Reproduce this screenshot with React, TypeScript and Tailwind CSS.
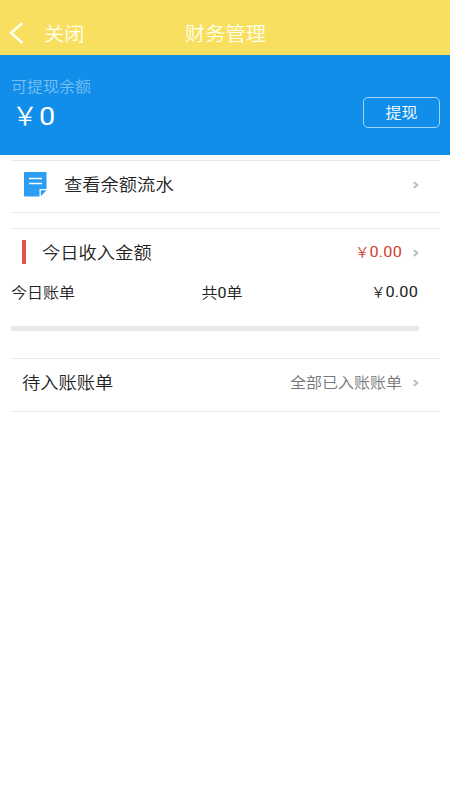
function Arrow() {
  return (
    <svg className="h-2 w-[6px] shrink-0" viewBox="0 0 6 8" fill="none" stroke="#bdbdbd" strokeWidth="2">
      <path d="M.8 1 4.3 4 .8 7" />
    </svg>
  )
}

function NoteIcon() {
  return (
    <svg className="mb-0.5 ml-3 h-[26px] w-6 shrink-0" viewBox="0 0 24 26">
      <path d="M2 1H22.500a1 1 0 0 1 1 1V18H16.500V25.500H2a1 1 0 0 1-1-1V2a1 1 0 0 1 1-1Z" fill="#2b9df4" />
      <path d="M17.800 19.300H23.500L17.800 25.300Z" fill="#2b9df4" />
      <path d="M6 7.500H19M6 12.500H19" stroke="#fff" strokeWidth="1.600" />
    </svg>
  )
}

function Money({ value }: { value: string }) {
  return (
    <span className="inline-flex items-baseline text-[16.300px] leading-none">
      <span className="text-[14.500px]">￥</span>
      <span className="font-[370] tracking-[.2px]">{value}</span>
    </span>
  )
}

export default function App() {
  return (
    <div className="h-[800px] w-[450px] overflow-hidden bg-white font-['Roboto','Noto_Sans_CJK_SC',sans-serif] font-[350] text-[#222]">
      <header className="grid h-[55px] grid-cols-[185px_1fr] items-center bg-[#f9df60] pt-3 text-[20.3px] leading-none text-[#fffff0]">
        <div className="flex items-center">
          <svg className="mb-0.5 ml-[9px] h-[22px] w-[15px]" viewBox="0 0 15 22" fill="none" stroke="currentColor" strokeWidth="2.5">
            <path d="M13.500 1 2 11 13.500 21" />
          </svg>
          <span className="ml-5 mt-0.5 scale-y-[.93]">关闭</span>
        </div>
        <h1 className="mt-0.5 scale-y-[.93]">财务管理</h1>
      </header>

      <section className="flex h-[100px] justify-between bg-[#118eea] pl-[11px] pr-[10px]">
        <div className="pt-6">
          <p className="scale-y-[.93] text-base leading-4 text-[#79bff3]">可提现余额</p>
          <p className="ml-px mt-1.5 flex items-baseline leading-[30px] text-white">
            <span className="scale-y-[.97] text-[26px]">￥</span>
            <span className="ml-px origin-left scale-x-105 scale-y-95 text-[27.500px] font-[370]">0</span>
          </p>
        </div>
        <button className="mt-[42px] h-[31px] w-[77px] rounded-[5px] border border-[#a6d4f7] text-base leading-none text-white">
          <span className="block scale-y-[.93]">提现</span>
        </button>
      </section>

      <main className="pl-[11px] pr-[10px]">
        <div className="mt-[5px] flex h-[53px] items-center border-y border-[#e8e8e8] pb-1 pr-[21px]">
          <NoteIcon />
          <span className="ml-[17px] mt-px flex-1 scale-y-[.93] text-[18.3px] leading-none">查看余额流水</span>
          <Arrow />
        </div>

        <section className="mt-[15px] h-[103px] border-t border-[#e8e8e8] pr-[21px]">
          <div className="flex h-[47px] items-center">
            <i className="mb-px ml-[11px] h-6 w-1 bg-[#df5549]" />
            <span className="ml-4 mt-0.5 flex-1 scale-y-[.93] text-[18.3px] leading-none">今日收入金额</span>
            <span className="mr-[11px] flex scale-y-[.95] text-[#d1402f]">
              <Money value="0.00" />
            </span>
            <Arrow />
          </div>
          <div className="grid h-8 scale-y-[.93] grid-cols-[190.500px_1fr_auto] items-center pt-px text-base leading-none">
            <span>今日账单</span>
            <span>
              共<span className="font-[370]">0</span>单
            </span>
            <span className="mr-px flex">
              <Money value="0.00" />
            </span>
          </div>
          <div className="mt-[18px] h-[5px] bg-[#e9e9e9]" />
        </section>

        <div className="mt-[27px] flex h-[54px] items-center border-y border-[#e8e8e8] pb-[5px] pr-[21px]">
          <span className="ml-[11px] mt-px flex-1 scale-y-[.93] text-[18.3px] leading-none">待入账账单</span>
          <span className="mr-[11px] mt-px scale-y-[.93] text-base leading-none text-[#777]">全部已入账账单</span>
          <Arrow />
        </div>
      </main>
    </div>
  )
}
